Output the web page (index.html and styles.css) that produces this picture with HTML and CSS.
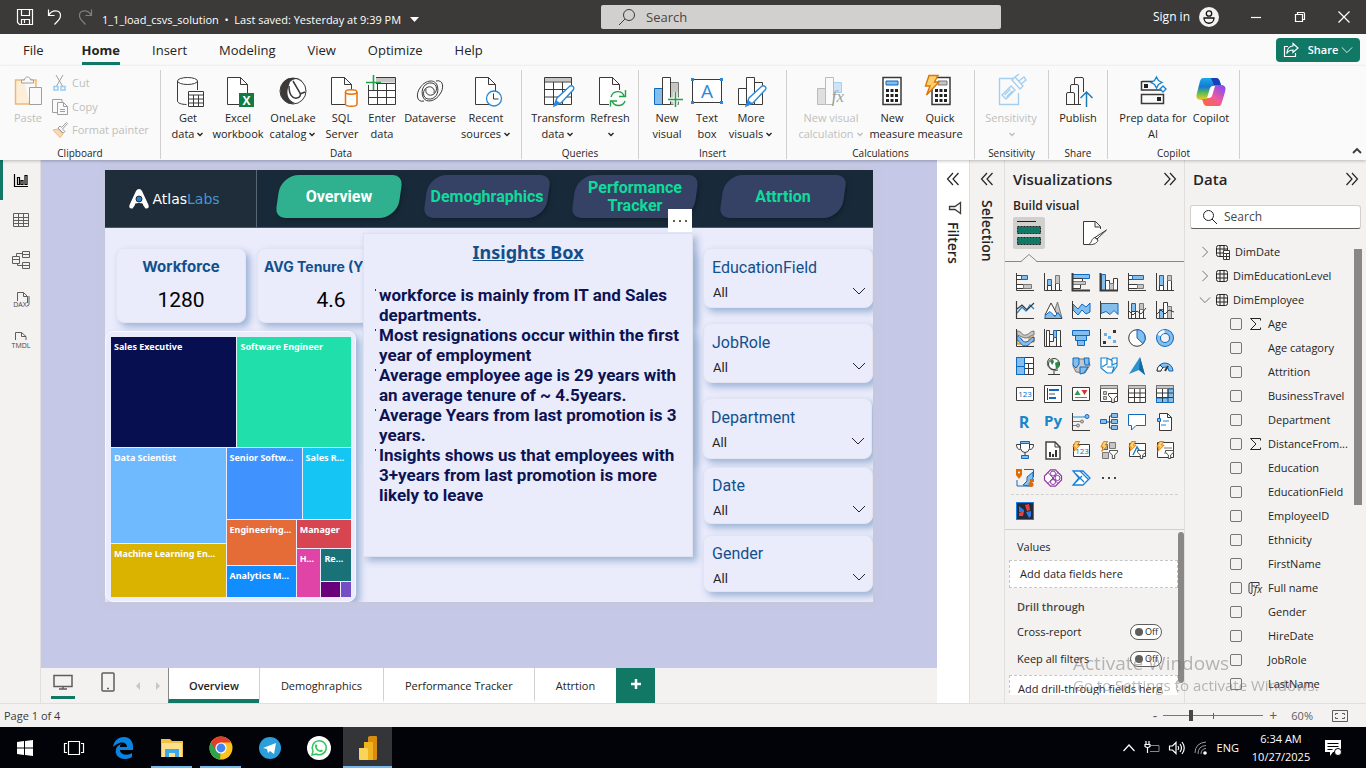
FILE: index.html
```html
<!DOCTYPE html>
<html lang="en">
<head>
<meta charset="utf-8">
<title>1_1_load_csvs_solution</title>
<link rel="stylesheet" href="styles.css">
</head>
<body>
<svg class="sprite" aria-hidden="true">
  <symbol id="chev" viewBox="0 0 8 8"><path d="M1.500 3 4 5.500 6.500 3" fill="none" stroke="currentColor" stroke-width="1.400"/></symbol>
  <symbol id="chevLg" viewBox="0 0 14 14"><path d="M1 4l6 6 6-6" fill="none" stroke="currentColor"/></symbol>
  <symbol id="dblLeft" viewBox="0 0 14 14"><path d="M7 1 1.500 7 7 13M12.500 1 7 7l5.500 6" fill="none" stroke="currentColor" stroke-width="1.200"/></symbol>
  <symbol id="dblRight" viewBox="0 0 14 14"><path d="M1.500 1 7 7l-5.500 6M7 1l5.500 6L7 13" fill="none" stroke="currentColor" stroke-width="1.200"/></symbol>
  <symbol id="lens" viewBox="0 0 16 16"><path d="M10 10l5 5" fill="none" stroke="currentColor"/><circle cx="6.500" cy="6.500" r="5" fill="none" stroke="currentColor"/></symbol>
  <symbol id="file" viewBox="0 0 32 32"><path class="kf" d="M5.500 2.500h13l7 7v20h-20zM18.500 2.500v7h7"/></symbol>
  <symbol id="tbl" viewBox="0 0 14 14"><rect x="1.500" y="1.500" width="11" height="11" rx="2" fill="none" stroke="currentColor"/><path d="M5 1.500v11M9 1.500v11M1.500 5h11M1.500 9h11" fill="none" stroke="currentColor"/></symbol>
  <symbol id="sigma" viewBox="0 0 14 14"><path d="M12.500 3.500v-2h-10l5.500 5.500-5.500 5.500h10v-2" fill="none" stroke="currentColor"/></symbol>
  <symbol id="bolt" viewBox="0 0 10 12"><path class="or" d="M4 .5h4.500L6 4.500h3L2 11.500 3.500 6.500H1z"/></symbol>
  <symbol id="funnel" viewBox="0 0 10 10"><path class="kf" d="M.5 .5h9v2l-3.200 3v4H3.700v-4L.5 2.500z"/></symbol>
</svg>

<header class="titlebar">
  <div class="quick">
    <button class="plain" aria-label="Save"><svg width="18" height="18" viewBox="0 0 18 18"><path class="w" d="M1.500 1.500h15v15h-13l-2-2zM5.500 1.500v6h8v-6M5.500 16.500v-5h8v5M8.500 12v3"/></svg></button>
    <button class="plain" aria-label="Undo"><svg width="18" height="18" viewBox="0 0 18 18"><path class="w" d="M2.500 1.500v6h6M2.500 7.500C6 1 14.500 1.500 14.500 7.500c0 4-3.500 6-6 9"/></svg></button>
    <button class="plain dim" aria-label="Redo"><svg width="18" height="18" viewBox="0 0 18 18"><path class="w" d="M15.500 1.500v6h-6M15.500 7.500C12 1 3.500 1.500 3.500 7.500c0 4 3.500 6 6 9"/></svg></button>
    <button class="plain docname">1_1_load_csvs_solution &nbsp;•&nbsp; Last saved: Yesterday at 9:39 PM<svg width="10" height="6" viewBox="0 0 10 6"><path d="M0 0h9L4.500 5z" fill="#fff"/></svg></button>
  </div>
  <label class="topsearch"><svg width="18" height="18" viewBox="0 0 18 18"><circle cx="11" cy="7" r="5.500" class="k"/><path class="k" d="M7 11l-6 6"/></svg><input type="text" placeholder="Search" aria-label="Search"></label>
  <div class="account">
    <button class="plain">Sign in</button>
    <svg width="20" height="20" viewBox="0 0 20 20"><circle cx="10" cy="10" r="10" fill="#f3f2f1"/><circle cx="10" cy="6.500" r="2.700" fill="none" stroke="#111" stroke-width="1.300"/><path d="M5 11h10c0 7-10 7-10 0z" fill="none" stroke="#111" stroke-width="1.300"/></svg>
  </div>
  <div class="winctl">
    <button class="plain" aria-label="Minimize"><svg width="12" height="12" viewBox="0 0 12 12"><path class="w" d="M1 6.500h10"/></svg></button>
    <button class="plain" aria-label="Restore"><svg width="12" height="12" viewBox="0 0 12 12"><path class="w" d="M1.500 3.500h7v7h-7zM3.500 3.500v-2h6q1 0 1 1v6h-2"/></svg></button>
    <button class="plain" aria-label="Close"><svg width="12" height="12" viewBox="0 0 12 12"><path class="w" d="M.5 .5l11 11M11.500 .5l-11 11"/></svg></button>
  </div>
</header>

<nav class="menubar">
  <a href="#file" class="file">File</a><a href="#home" class="on">Home</a><a href="#insert">Insert</a><a href="#modeling">Modeling</a><a href="#view">View</a><a href="#optimize">Optimize</a><a href="#help">Help</a>
  <button class="share"><svg width="16" height="16" viewBox="0 0 16 16"><path class="w" d="M5 4.500H1.500v10h11V11M10 1.500l5 4.500-5 4.500V8C7 8 5 9 3.800 11.500 4 7 6.500 4 10 4z"/></svg>Share<svg width="12" height="12"><use href="#chevLg"/></svg></button>
</nav>

<section class="ribbon">
  <div class="group clipboard"><div class="row">
    <button class="rb off"><svg width="32" height="32" viewBox="0 0 32 32"><path d="M12 5H3.500v24h14V27M24 12V5h-5" fill="#fcefd9" stroke="#f0b878" stroke-width="1.500"/><path d="M9.500 8V5h3c0-4 6-4 6 0h3v3z" fill="#fafafa" stroke="#a19f9d"/><path d="M17.500 12.500h12v17h-12z" fill="#fafafa" stroke="#a19f9d"/></svg><span>Paste</span></button>
    <div class="stack">
      <button class="sb"><svg width="16" height="16" viewBox="0 0 16 16"><path d="M4 0l6.500 11M11 0L4.500 11" fill="none" stroke="#a19f9d"/><path d="M2 11.500h4v3.500H2zM9 11.500h4v3.500H9z" fill="none" stroke="#9ccbee" stroke-width="1.500"/></svg>Cut</button>
      <button class="sb"><svg width="16" height="16" viewBox="0 0 16 16"><path d="M10 3V.5H.5v13H5M5.500 3.500h6l4 4v8h-10zM11.500 3.500v4h4M8 10.500h5M8 12.500h5" fill="none" stroke="#a19f9d"/></svg>Copy</button>
      <button class="sb"><svg width="16" height="16" viewBox="0 0 16 16"><path d="M1 8l5-1 5 5-3 3.500z" fill="#fbd9b0" stroke="#f0b878"/><path d="M6 6l5 5 2-1.500-2.500-2.500 5-5.500-1-1L9.500 5.500 8 4z" fill="#fafafa" stroke="#a19f9d"/></svg>Format painter</button>
    </div></div><h2>Clipboard</h2></div>

  <div class="group data"><div class="row">
    <button class="rb w48"><svg width="32" height="32" viewBox="0 0 32 32"><path class="k" d="M5.500 6v20c0 2 4 3.500 9 3.500M25.500 6v9"/><ellipse class="kf" cx="15.500" cy="6" rx="10" ry="3.500"/><path class="kf" d="M16.500 16.500h15v15h-15z"/><path class="k" d="M16.500 20h15M16.500 24h15M16.500 28h15M21.500 20v12M26.500 20v12"/></svg><span>Get<br>data<svg width="8" height="8"><use href="#chev"/></svg></span></button>
    <button class="rb w52"><svg width="32" height="32" viewBox="0 0 32 32"><use href="#file" width="32" height="32"/><path d="M17 18h15v14H17z" fill="#107c41"/><text x="24.500" y="30" class="t" fill="#fff" font-size="12" font-weight="700">X</text></svg><span>Excel<br>workbook</span></button>
    <button class="rb w58"><svg width="32" height="32" viewBox="0 0 32 32"><circle cx="16" cy="16" r="13" class="kf"/><path d="M16 3C5 2 0 16 6 24c5 6 10 5 12 4C12 26 9 20 11 13l2-6c4-4 9-4 13 0C24 4 20 2.500 16 3z" fill="#3b3a39"/><path class="k" d="M12 11c0 8 3 13 8 12 3-.5 4-3 3-5l-7-12M23 19l5-2" stroke-width="1.500"/></svg><span>OneLake<br>catalog<svg width="8" height="8"><use href="#chev"/></svg></span></button>
    <button class="rb w40"><svg width="32" height="32" viewBox="0 0 32 32"><use href="#file" width="32" height="32"/><path d="M19.500 17v12c0 3 11.500 3 11.500 0V17" fill="#fff" stroke="#e8710a" stroke-width="1.500"/><ellipse cx="25.200" cy="17" rx="5.700" ry="2.200" fill="#fff" stroke="#e8710a" stroke-width="1.500"/></svg><span>SQL<br>Server</span></button>
    <button class="rb w40"><svg width="32" height="32" viewBox="0 0 32 32"><path d="M2.500 2.500h27v5h-27z" fill="#c8c6c4"/><path class="kf" d="M2.500 8.500h27v21h-27z"/><path class="k" d="M9 2.500h20.500v6M2.500 15.500h27M2.500 22.500h27M11.500 8v21M20.500 8v21"/><path d="M-1 1h11v9H-1z" fill="#fafafa"/><path d="M7.500 0v15M0 7.500h15" stroke="#24a148" stroke-width="1.600"/></svg><span>Enter<br>data</span></button>
    <button class="rb w56"><svg width="32" height="32" viewBox="0 0 32 32"><g class="k"><path d="M10 26c-8 2-8-8-4-13C10 6 20 3 23 10c3 8-2 15-9 14-6-1-6-10 0-12 4-1 7 2 6 6"/><path d="M22 6c8-2 8 8 4 13-4 7-14 10-17 3-3-8 2-15 9-14 6 1 6 10 0 12-4 1-7-2-6-6"/></g></svg><span>Dataverse</span></button>
    <button class="rb w56"><svg width="32" height="32" viewBox="0 0 32 32"><use href="#file" width="32" height="32"/><circle cx="24" cy="23.500" r="7.500" fill="#fff" stroke="#2b88d8" stroke-width="1.300"/><path class="k" d="M23.500 18.500v5.500h5"/></svg><span>Recent<br>sources<svg width="8" height="8"><use href="#chev"/></svg></span></button>
  </div><h2>Data</h2></div>

  <div class="group queries"><div class="row">
    <button class="rb w62"><svg width="32" height="32" viewBox="0 0 32 32"><path class="kf" d="M2.500 2.500h27v27h-27z"/><path d="M3 3h26v3.500H3z" fill="#c8c6c4"/><path class="k" d="M2.500 7h27M2.500 14.500h27M2.500 22h27M11.500 7v22M20.500 7v22"/><path d="M12 31l3-8L28 11c2-1 5 1 3.500 3.500L19 28z" fill="#fff" stroke="#2b88d8" stroke-width="1.400"/><path d="M12 31l2-6 4 3z" fill="#2b88d8"/></svg><span>Transform<br>data<svg width="8" height="8"><use href="#chev"/></svg></span></button>
    <button class="rb w42"><svg width="32" height="32" viewBox="0 0 32 32"><use href="#file" width="32" height="32"/><path d="M15 15h17v17H15z" fill="#fafafa"/><path d="M17 22c2-7 11-7 13-1M31.500 15v6.500H25M31 26c-2 6-11 6-13 0M16.500 31.500V26H23" fill="none" stroke="#24a148" stroke-width="1.400"/></svg><span>Refresh<br><svg width="8" height="8"><use href="#chev"/></svg></span></button>
  </div><h2>Queries</h2></div>

  <div class="group insert"><div class="row">
    <button class="rb w46"><svg width="32" height="32" viewBox="0 0 32 32"><path class="b" d="M3.500 13.500h8v16h-8z"/><path class="g" d="M19.500 7.500h8v22h-8z"/><path class="kf" d="M11.500 2.500h8v27h-8z"/><path d="M24.500 17v15M17 24.500h15" stroke="#fafafa" stroke-width="4"/><path d="M24.500 17v15M17 24.500h15" stroke="#24a148" stroke-width="1.500"/></svg><span>New<br>visual</span></button>
    <button class="rb w34"><svg width="32" height="32" viewBox="0 0 32 32"><path class="kf" d="M1.500 4.500h29v23h-29z"/><path fill="#2b88d8" d="M0 3h3v3H0zM29 3h3v3h-3zM0 26h3v3H0zM29 26h3v3h-3z"/><text class="t" x="16" y="23" font-size="19" fill="#2b88d8">A</text></svg><span>Text<br>box</span></button>
    <button class="rb w54"><svg width="32" height="32" viewBox="0 0 32 32"><path class="kf" d="M3.500 13.500h8v16h-8zM19.500 7.500h8v22h-8z"/><path class="kf" d="M11.500 2.500h8v27h-8z"/><path d="M11 31l3-8L27 11c2-1 5 1 3.500 3.500L18 28z" fill="#fff" stroke="#2b88d8" stroke-width="1.400"/><path d="M11 31l2-6 4 3z" fill="#2b88d8"/></svg><span>More<br>visuals<svg width="8" height="8"><use href="#chev"/></svg></span></button>
  </div><h2>Insert</h2></div>

  <div class="group calc"><div class="row">
    <button class="rb w76 off"><svg width="32" height="32" viewBox="0 0 32 32"><path d="M2.500 13.500h8v16h-8z" fill="#e1dfdd" stroke="#bbb"/><path d="M18.500 7.500h8v10h-8z" fill="#cfe4f6" stroke="#a6cfee"/><path d="M10.500 2.500h8v27h-8z" fill="#fafafa" stroke="#bbb"/><text class="t serif" x="23" y="27" font-size="17" font-style="italic" fill="#a19f9d">fx</text></svg><span>New visual<br>calculation<svg width="8" height="8"><use href="#chev"/></svg></span></button>
    <button class="rb w46"><svg width="32" height="32" viewBox="0 0 32 32"><path class="kf" d="M7 2.500h18v27H7z" stroke-width="1.500"/><path class="b" d="M10 6h12v4H10z"/><path d="M10 15.500h12M10 20.500h12M10 25.500h12" stroke="#222" stroke-width="3" stroke-dasharray="3 1.500"/></svg><span>New<br>measure</span></button>
    <button class="rb w50"><svg width="32" height="32" viewBox="0 0 32 32"><path class="kf" d="M8 2.500h18v27H8z" stroke-width="1.500"/><path class="g" d="M14 6h9v4h-9z"/><path d="M11 15.500h12M11 20.500h12M11 25.500h12" stroke="#222" stroke-width="3" stroke-dasharray="3 1.500"/><path class="or" d="M5 .5h9L10.500 7H15L2.500 20 6 11H1.500z" stroke-width="1.400"/></svg><span>Quick<br>measure</span></button>
  </div><h2>Calculations</h2></div>

  <div class="group sens"><div class="row">
    <button class="rb w60 off"><svg width="32" height="32" viewBox="0 0 32 32"><g fill="none" stroke="#a6cfee" stroke-width="1.400"><path d="M19 3.500H4.500v26h19V18"/><path d="M7 20l9-9 4 4-9 9zM9.500 20l6-6M11.500 22l6-6"/><path d="M17 5l3-3 8 9-3 3zM20 2l4-3M24 6l5-4 2 3-5 4"/></g></svg><span>Sensitivity<br><svg width="8" height="8"><use href="#chev"/></svg></span></button>
  </div><h2>Sensitivity</h2></div>

  <div class="group pub"><div class="row">
    <button class="rb w50"><svg width="32" height="32" viewBox="0 0 32 32"><path class="k" d="M12.500 9V4q0-1.500 1.500-1.500h6q1.500 0 1.500 1.500v13M8.500 17v-6q0-1.500 1.500-1.500h5q1.500 0 1.500 1.500v18.500M4.500 29.500V19q0-1.500 1.500-1.500h5q1.500 0 1.500 1.500v10.500M4 29.500h15"/><path d="M24.500 32V17M18.500 23l6-6 6 6" fill="none" stroke="#1a7db6" stroke-width="1.500"/></svg><span>Publish</span></button>
  </div><h2>Share</h2></div>

  <div class="group cop"><div class="row">
    <button class="rb w76"><svg width="32" height="32" viewBox="0 0 32 32"><path class="k" d="M5 6.500h11M4.500 6v9h20M4.500 19.500h22v9h-22z" stroke-width="1.500"/><path d="M7 9h4v4H7zM20 22h4v4h-4z" fill="#222"/><path d="M19.500 2l2 3.500L25 7.500l-3.500 2-2 3.500-2-3.500-3.500-2 3.500-2zM26 11l3 3-3 3-3-3z" fill="none" stroke="#1a86d0" stroke-width="1.400"/></svg><span>Prep data for<br>AI</span></button>
    <button class="rb w40"><svg width="32" height="32" viewBox="0 0 32 32"><defs><linearGradient id="ca" x1="0" y1="0" x2="0" y2="1"><stop offset="0" stop-color="#1ba8ea"/><stop offset=".4" stop-color="#1578d4"/><stop offset=".7" stop-color="#62c245"/><stop offset="1" stop-color="#ffc72a"/></linearGradient><linearGradient id="cb" x1=".8" y1="0" x2="0" y2="1"><stop offset="0" stop-color="#8a4cf0"/><stop offset=".5" stop-color="#f05c9a"/><stop offset="1" stop-color="#f96b28"/></linearGradient></defs><path d="M8 3h13q3 0 4 4l1 3h-6l-4 12q-2 3-5 3H5q-5-1-3-7L5 6q1-3 3-3z" fill="url(#ca)"/><path d="M16 3h5q3 0 4 4l1 3h-7z" fill="#1540b8"/><path d="M24 31H12q-3 0-4-4l-1-3h5l4-12q1-2 5-2h6q5 1 3 7l-3 10q-1 4-3 4z" fill="url(#cb)"/><path d="M15 13q1-2 3-2h2l-3 10q-1 2-3 2h-2z" fill="#fff"/></svg><span>Copilot</span></button>
  </div><h2>Copilot</h2></div>
  <button class="plain collapse" aria-label="Collapse the ribbon"><svg width="10" height="8" viewBox="0 0 10 8"><path d="M1 6l4-4 4 4" class="k" stroke-width="1.800"/></svg></button>
</section>

<main class="work">
  <nav class="rail">
    <button class="on" aria-label="Report view"><svg width="18" height="18" viewBox="0 0 18 18"><path d="M2.500 3v12.500h13.500M5.500 6.500h2v7h-2zM9 9.500h2v4H9zM13 4.500h2v9h-2z" fill="none" stroke="#000" stroke-width="1.200"/></svg></button>
    <button aria-label="Table view"><svg width="18" height="18" viewBox="0 0 18 18"><path class="r" d="M1.500 2.500h15v13h-15zM1.500 6.500h15M1.500 9.500h15M1.500 12.500h15M6.500 2.500v13M11.500 2.500v13"/></svg></button>
    <button aria-label="Model view"><svg width="20" height="20" viewBox="0 0 20 20"><path class="r" d="M1.500 6.500h7v7h-7zM1.500 9.500h7M11.500 1.500h7v6h-7zM11.500 4.500h7M11.500 12.500h7v6h-7zM11.500 15.500h7M5.500 6.500V3.500h6M6.500 13.500v2h5"/></svg></button>
    <button aria-label="DAX query view"><svg width="20" height="20" viewBox="0 0 20 20"><path class="r" d="M6.500 11V2.500h6l4 4V13M12.500 2.500v4h4M18 6v8q0 2-2 2"/><text class="t" x="9" y="17" font-size="7" fill="#484644">DAX</text></svg></button>
    <button aria-label="TMDL view"><svg width="20" height="20" viewBox="0 0 20 20"><path class="r" d="M4.500 10V2.500h6l4.500 4V10M10.500 2.500v4H15"/><text class="t" x="10" y="18" font-size="7" fill="#484644">TMDL</text></svg></button>
  </nav>

  <div class="center">
    <div class="canvas">
      <article class="report">
        <header class="rhead">
          <div class="logo"><svg width="20" height="20" viewBox="0 0 20 20"><path d="M7 2q1-2 3-2t3 2l6.500 14q1 4-3 3.500L14 16q1-2-4-2t-4 2l-2.500 3.500Q-.5 20 .5 16z" fill="#fff"/><circle cx="10" cy="10" r="3" fill="#2b7cc0" stroke="#1f2d3b"/></svg><span>Atlas<b>Labs</b></span></div>
          <nav class="pills"><a href="#ov" class="on">Overview</a><a href="#de">Demoghraphics</a><a href="#pt">Performance<br>Tracker</a><a href="#at">Attrtion</a></nav>
        </header>
        <div class="rbody">
          <div class="visuals">
            <div class="cards">
              <section class="kpi kpi-first"><h3>Workforce</h3><p>1280</p></section>
              <section class="kpi kpi-wide"><h3 class="sm">AVG Tenure (Y</h3><p>4.6</p></section>
              <section class="kpi kpi-rest"></section>
            </div>
            <div class="charts">
              <section class="treemap">
                <div class="tr" style="flex-grow:110"><div class="c1" style="flex-grow:126">Sales Executive</div><div class="c2" style="flex-grow:114">Software Engineer</div></div>
                <div class="tr" style="flex-grow:150">
                  <div class="tc" style="flex-grow:115"><div class="c3" style="flex-grow:96">Data Scientist</div><div class="c4" style="flex-grow:54">Machine Learning En...</div></div>
                  <div class="tc" style="flex-grow:125">
                    <div class="tr" style="flex-grow:72"><div class="c5" style="flex-grow:76">Senior Softw...</div><div class="c6" style="flex-grow:49">Sales R...</div></div>
                    <div class="tr" style="flex-grow:77">
                      <div class="tc" style="flex-grow:70"><div class="c7" style="flex-grow:45">Engineering...</div><div class="c8" style="flex-grow:32">Analytics M...</div></div>
                      <div class="tc" style="flex-grow:55"><div class="c9" style="flex-grow:28">Manager</div>
                        <div class="tr" style="flex-grow:49"><div class="c10" style="flex-grow:24">H...</div>
                          <div class="tc" style="flex-grow:30"><div class="c11" style="flex-grow:33">Re...</div><div class="tr" style="flex-grow:16"><div class="c12" style="flex-grow:19"></div><div class="c13" style="flex-grow:11"></div></div></div>
                        </div></div>
                    </div>
                  </div>
                </div>
              </section>
              <section class="under"></section>
            </div>
          </div>
          <div class="slicers">
            <div class="slicer"><label for="s1">EducationField</label><div class="sel"><select id="s1"><option>All</option></select><svg width="14" height="14"><use href="#chevLg"/></svg></div></div>
            <div class="slicer"><label for="s2">JobRole</label><div class="sel"><select id="s2"><option>All</option></select><svg width="14" height="14"><use href="#chevLg"/></svg></div></div>
            <div class="slicer near"><label for="s3">Department</label><div class="sel"><select id="s3"><option>All</option></select><svg width="14" height="14"><use href="#chevLg"/></svg></div></div>
            <div class="slicer short"><label for="s4">Date</label><div class="sel"><select id="s4"><option>All</option></select><svg width="14" height="14"><use href="#chevLg"/></svg></div></div>
            <div class="slicer short"><label for="s5">Gender</label><div class="sel"><select id="s5"><option>All</option></select><svg width="14" height="14"><use href="#chevLg"/></svg></div></div>
          </div>
          <aside class="insights">
            <button class="more" aria-label="More options"><i></i><i></i><i></i></button>
            <h2>Insights Box</h2>
            <ul>
              <li>workforce is mainly from IT and Sales<br>departments.</li>
              <li>Most resignations occur within the first<br>year of employment</li>
              <li>Average employee age is 29 years with<br>an average tenure of ~ 4.5years.</li>
              <li>Average Years from last promotion is 3<br>years.</li>
              <li>Insights shows us that employees with<br>3+years from last promotion is more<br>likely to leave</li>
            </ul>
          </aside>
        </div>
      </article>
    </div>
    <div class="pages">
      <button class="dev on" aria-label="Desktop layout"><svg width="20" height="16" viewBox="0 0 20 16"><path d="M1 1.500h18v11H1zM6 15h8M10 12v3" fill="none" stroke="#605e5c" stroke-width="1.500"/></svg></button>
      <button class="dev" aria-label="Mobile layout"><svg width="14" height="20" viewBox="0 0 14 20"><rect x="1" y="1" width="12" height="18" rx="1" fill="none" stroke="#605e5c" stroke-width="1.500"/><path d="M6 16.500h2" stroke="#605e5c" stroke-width="1.500"/></svg></button>
      <button class="arr" aria-label="Previous page"><svg width="6" height="8"><path d="M5 0v8L1 4z" fill="#c8c6c4"/></svg></button>
      <button class="arr" aria-label="Next page"><svg width="6" height="8"><path d="M1 0v8l4-4z" fill="#c8c6c4"/></svg></button>
      <div class="ptabs"><button class="on">Overview</button><button>Demoghraphics</button><button>Performance Tracker</button><button>Attrtion</button><button class="add" aria-label="New page"><svg width="12" height="12"><path d="M6 1v10M1 6h10" stroke="#fff" stroke-width="2.500"/></svg></button></div>
    </div>
  </div>

  <aside class="strip filters"><button class="plain" aria-label="Expand filters"><svg width="14" height="14"><use href="#dblLeft"/></svg></button><svg width="14" height="14" viewBox="0 0 14 14"><path class="k" d="M12.500 1.500v11L7 8.500H1.500v-3H7z" stroke-width="1.300"/></svg><h2>Filters</h2></aside>
  <aside class="strip selection"><button class="plain" aria-label="Expand selection"><svg width="14" height="14"><use href="#dblLeft"/></svg></button><h2>Selection</h2></aside>

  <aside class="viz">
    <div class="ptitle"><h2>Visualizations</h2><button class="plain" aria-label="Collapse"><svg width="14" height="14"><use href="#dblRight"/></svg></button></div>
    <h3>Build visual</h3>
    <div class="modes">
      <button class="on" aria-label="Build"><svg width="24" height="24" viewBox="0 0 24 24"><path d="M0 .5h19" stroke="#222"/><path d="M.5 5.500h23v7H.5zM.5 16.500h23v7H.5z" fill="#117865" stroke="#222" stroke-dasharray="2 1"/></svg></button>
      <button aria-label="Format"><svg width="26" height="26" viewBox="0 0 26 26"><path class="kf" d="M8 24.500H1.500v-23h12l5 5V9M13 1.500V7h5.500"/><path class="kf" d="M24.500 10L15 19l-2-1.500zM13 17.500l3 2.500c-1 4-6 5-9 4.500 3-2 2-6 6-7z"/></svg></button>
      <svg class="notch" width="16" height="8" viewBox="0 0 16 8"><path d="M0 8L8 0l8 8z" fill="#f3f2f1"/><path d="M0 7.500L8 .5l8 7" fill="none" stroke="#8a8886"/></svg>
    </div>
    <div class="vgrid">
      <svg viewBox="0 0 18 18"><path class="kf" d="M.5 2.500h5v4h-5zM.5 11.500h7v4h-7z"/><path class="b" d="M5.500 2.500h6v4h-6z"/><path class="g" d="M7.500 11.500h8v4h-8z"/><path class="k" d="M.5 0v17.500H18"/></svg>
      <svg viewBox="0 0 18 18"><path class="b" d="M3.500 6.500h4v6h-4z"/><path class="kf" d="M3.500 12.500h4v5h-4zM11.500 10.500h4v7h-4z"/><path class="g" d="M11.500 2.500h4v8h-4z"/><path class="k" d="M.5 0v17.500H18"/></svg>
      <svg viewBox="0 0 18 18"><path class="b" d="M.5 1.500h17v4H.5z"/><path class="kf" d="M.5 5.500h10v3H.5zM.5 11.500h8v4h-8z"/><path class="g" d="M.5 8.500h13v3H.5z"/><path class="k" d="M.5 0v17.500H18" stroke-width="2"/></svg>
      <svg viewBox="0 0 18 18"><path class="b" d="M1.500 1.500h4v16h-4z"/><path class="kf" d="M5.500 7.500h4v10h-4zM13.500 5.500h4v12h-4z"/><path class="g" d="M9.500 10.500h4v7h-4z"/><path class="k" d="M.5 0v17.500H18" stroke-width="2"/></svg>
      <svg viewBox="0 0 18 18"><path class="kf" d="M.5 2.500h4v4h-4zM.5 11.500h9v4h-9z"/><path class="b" d="M4.500 2.500h11v4h-11z"/><path class="g" d="M9.500 11.500h6v4h-6z"/><path class="k" d="M.5 0v17.500H18"/></svg>
      <svg viewBox="0 0 18 18"><path class="b" d="M3.500 2.500h4v10h-4z"/><path class="kf" d="M3.500 12.500h4v5h-4zM11.500 7.500h4v10h-4z"/><path class="g" d="M11.500 2.500h4v5h-4z"/><path class="k" d="M.5 0v17.500H18"/></svg>

      <svg viewBox="0 0 18 18"><path d="M1 12l5-6 4 4 4-6 4 4" fill="none" stroke="#1a86d0" stroke-width="1.300"/><path class="k" d="M.5 0v17.500H18M1 8l5-4 5 5 7-7" stroke-width="1.200"/></svg>
      <svg viewBox="0 0 18 18"><path class="g" d="M8 17l5.500-16L18 17z"/><path class="kf" d="M1 14l6-12 7 13z"/><path class="b" d="M1 17.500v-3l5-4 5 5 3-4 4 6z"/><path class="k" d="M.5 17.500H18"/></svg>
      <svg viewBox="0 0 18 18"><path class="b" d="M1 3l5 5 4-5 4 3 4-4v9l-4 2-4-4-4 5-5-5z"/><path class="k" d="M.5 0v17.500H18"/></svg>
      <svg viewBox="0 0 18 18"><path class="b" d="M1 2.500h17v11l-4-4-4 4-4-3-5 2z"/><path class="k" d="M.5 0v17.500H18"/></svg>
      <svg viewBox="0 0 18 18"><path class="b" d="M3.500 2.500h4v8h-4z"/><path class="kf" d="M3.500 10.500h4v7h-4zM11.500 8.500h4v9h-4z"/><path class="g" d="M11.500 2.500h4v6h-4z"/><path class="k" d="M.5 0v17.500H18M1 10l4 4 4-4 4 3 5-6"/></svg>
      <svg viewBox="0 0 18 18"><path class="b" d="M3.500 8.500h4v9h-4z"/><path class="kf" d="M7.500 1.500h4v16h-4z"/><path class="g" d="M11.500 5.500h4v12h-4z"/><path class="k" d="M.5 0v17.500H18M1 13l4-4 4 4 4-4 5 2"/></svg>

      <svg viewBox="0 0 18 18"><path class="or" d="M1 10h5v5H1zM13 8h5v5h-5z"/><path class="g" d="M1 2c5 0 5 5 9 4s4-4 8-4v4c-4 0-5 3-8 3S5 7 1 6z"/><path class="b" d="M1 7c4 0 4 6 9 6 4 0 4-5 8-5v4c-3 0-4 5-9 5-4 0-5-5-8-6z"/><path class="k" d="M.5 0v17.500H18"/></svg>
      <svg viewBox="0 0 18 18"><path class="kf" d="M2.500 1.500h3v16h-3zM12.500 1.500h4v16h-4zM5.500 5.500h4v7h-4z"/><path class="b" d="M9.500 1.500h3v7h-3z"/><path class="k" d="M.5 0v17.500H18"/></svg>
      <svg viewBox="0 0 18 18"><path class="b" d="M.5 1.500h17v5H.5zM3.500 6.500h11v5h-11zM5.500 11.500h7v5h-7z"/></svg>
      <svg viewBox="0 0 18 18"><path class="k" d="M.5 0v17.500H18"/><path fill="#333" d="M13 1h3v3h-3zM3 12h3v3H3z"/><path fill="#69b1ea" d="M4 4h3v3H4zM8 7h3v3H8zM13 11h3v3h-3z"/></svg>
      <svg viewBox="0 0 18 18"><circle cx="9" cy="9" r="8.300" class="kf"/><path class="b" d="M9 .7a8.300 8.300 0 0 1 6 14L9 9z"/></svg>
      <svg viewBox="0 0 18 18"><circle cx="9" cy="9" r="6.500" fill="none" stroke="#1068bf" stroke-width="5"/><circle cx="9" cy="9" r="6.500" fill="none" stroke="#83beec" stroke-width="3"/><path d="M3 6.500A6.500 6.500 0 0 1 8.500 2.500" fill="none" stroke="#fff" stroke-width="3"/></svg>

      <svg viewBox="0 0 18 18"><path class="kf" d="M.5 .5h17v17H.5zM12.500 6v11M8 11.500h9M8.500 6.500h9"/><path class="b" d="M.5 .5h8v17h-8zM.5 9.500h8"/></svg>
      <svg viewBox="0 0 18 18"><circle class="kf" cx="10" cy="7" r="5.500"/><path d="M6 4l3-2 1 3-2 3zM11 6l4-2v5l-3 3z" fill="#2a8a44"/><path class="k" d="M6 1c-6 5-1 14 8 12M10 14v3M4 17.500h12"/></svg>
      <svg viewBox="0 0 18 18"><path class="g" d="M2 2h14l2 6-5 8-9-1-3-6z"/><path class="b" d="M1 1h6v6l-3 4-3-3zM12 1h5v7h-4zM8 10h8l-4 6-4 1z"/></svg>
      <svg viewBox="0 0 18 18"><path d="M1 1h6l4 2 2-2h4v8l-5 7H7l-6-5zM7 1v6l-5 3M12 3v5l5-2M7 10h7l-2 6" fill="#fff" stroke="#1a86d0" stroke-width="1.200"/></svg>
      <svg viewBox="0 0 18 18"><path d="M12 0l5 18-6-5-10 4z" fill="#2b93d1"/><path d="M12 0l5 18-6-5z" fill="#176a9e"/></svg>
      <svg viewBox="0 0 18 18"><path class="b" d="M1 14a8 8 0 0 1 16 0h-4a4 4 0 0 0-8 0z"/><path class="kf" d="M1 14a8 8 0 0 1 3-6l3 3q-2 1-2 3z"/><path class="k" d="M12 9l-3 5" stroke-width="2"/></svg>

      <svg viewBox="0 0 18 18"><path class="kf" d="M.5 2.500h17v13H.5z"/><text class="t" x="9" y="12" font-size="8" fill="#1068bf">123</text></svg>
      <svg viewBox="0 0 18 18"><path class="kf" d="M.5 .5h17v17H.5zM3.500 3v12"/><path d="M5 5h10M5 13h7" stroke="#1068bf" stroke-width="2"/><path d="M5 9h6" stroke="#555"/></svg>
      <svg viewBox="0 0 18 18"><path class="kf" d="M.5 2.500h17v13H.5z"/><path d="M5.500 5l3 5h-6z" fill="#3c9a4a"/><path d="M12.500 10l3-5h-6z" fill="#d13438"/><path d="M3 12.500h12" stroke="#777"/></svg>
      <svg viewBox="0 0 18 18"><path class="kf" d="M.5 .5h17v16H.5z"/><path class="g" d="M.5 .5h17v3H.5zM3.500 6.500h3v3h-3zM3.500 11.500h3v3h-3z"/><use href="#funnel" x="8" y="8" width="10" height="10"/></svg>
      <svg viewBox="0 0 18 18"><path class="kf" d="M.5 .5h17v17H.5z"/><path class="g" d="M.5 .5h17v3H.5z"/><path class="k" d="M1 8h16M1 12.500h16M6.500 4v13M12 4v13"/></svg>
      <svg viewBox="0 0 18 18"><path class="kf" d="M.5 .5h17v17H.5z"/><path class="g" d="M.5 .5h17v3H.5z"/><path class="b" d="M12 4h5.500v13.500H.5V13H12z"/><path class="k" d="M1 8h16M1 12.500h16M6.500 4v13M12 4v13"/></svg>

      <svg viewBox="0 0 18 18"><text class="t" x="8" y="15" font-size="16" font-weight="700" fill="#1a86c8">R</text></svg>
      <svg viewBox="0 0 18 18"><text class="t" x="9" y="13" font-size="15" font-weight="700" fill="#1a86c8">Py</text></svg>
      <svg viewBox="0 0 18 18"><path class="k" d="M.5 0v17.500H18"/><path d="M1 4h12" stroke="#1a86d0"/><path d="M1 8.500h8M1 12.500h5" stroke="#777"/><circle cx="15" cy="3.500" r="2" class="b"/><circle cx="10" cy="8.500" r="1.500" class="g"/><circle cx="6" cy="12.500" r="1.500" class="g"/></svg>
      <svg viewBox="0 0 18 18"><path class="k" d="M6 9h6M9.500 3v12M9.500 3H12M9.500 15H12"/><path class="b" d="M.5 6.500h6v4h-6zM11.500 .5h6v4h-6zM11.500 6.500h6v4h-6zM11.500 12.500h6v4h-6z"/></svg>
      <svg viewBox="0 0 18 18"><path d="M.5 1.500h17v11H8L3.500 17v-4.500h-3z" fill="#fff" stroke="#1068bf"/></svg>
      <svg viewBox="0 0 18 18"><path class="kf" d="M3.500 .5h8l4 4v13h-12zM11.500 .5v4h4"/><path class="b" d="M1.500 5.500h3v3h-3z"/><path d="M7 8h6M5 12h5" stroke="#1a86d0"/></svg>

      <svg viewBox="0 0 18 18"><path class="kf" d="M4.500 1.500h9v6q-1 4-4.500 4t-4.500-4zM4.500 3.500h-4q0 5 4 5M13.500 3.500h4q0 5-4 5M9 11.500v3"/><path class="b" d="M4.500 .5h9v2h-9zM5.500 14.500h7v3h-7z"/></svg>
      <svg viewBox="0 0 18 18"><path d="M2 1h9l5 5v12H2z" fill="#fff" stroke="#444" stroke-width="1.500"/><path d="M6 11v5M9 13v3M12 9v7" stroke="#333" stroke-width="2"/><path class="k" d="M11 1v5h5"/></svg>
      <svg viewBox="0 0 18 18"><path class="kf" d="M1.500 3.500h16v12h-16z"/><text class="t" x="10" y="13" font-size="8" fill="#1068bf">123</text><use href="#bolt" width="9" height="11"/></svg>
      <svg viewBox="0 0 18 18"><path class="g" d="M9.500 1.500h6v6h-6zM2.500 11.500h6v6h-6z"/><path class="b" d="M2.500 3.500h5v5h-5z"/><use href="#bolt" width="9" height="11"/><use href="#funnel" x="9" y="9" width="9" height="9"/></svg>
      <svg viewBox="0 0 18 18"><path class="kf" d="M1.500 2.500h16v13h-16z"/><path d="M5 14l4-8 4 6" fill="none" stroke="#1a86d0" stroke-width="1.500"/><use href="#bolt" width="9" height="11"/><use href="#funnel" x="9" y="9" width="9" height="9"/></svg>
      <svg viewBox="0 0 18 18"><path class="kf" d="M1.500 1.500h16v15h-16z"/><path d="M8 7h8M8 12h4" stroke="#777"/><use href="#bolt" width="9" height="11"/><use href="#funnel" x="9" y="9" width="9" height="9"/></svg>

      <svg viewBox="0 0 18 18"><path d="M1 11v6h14M8 .5h9.500V8" fill="none" stroke="#1068bf"/><path class="b" d="M7 16l4-4V8l6-5v6l-4 8z"/><path d="M0 0h6v6l-3 4-3-4zM14 10h4v3h-4z" fill="#e06a00"/><circle cx="3" cy="3.500" r="1" fill="#fff"/><circle cx="15" cy="15.500" r="2.500" fill="#e06a00"/></svg>
      <svg viewBox="0 0 18 18"><path d="M6.500 .8h5L17.500 7v4l-6 6.200h-5L.5 11V7z" fill="#fff" stroke="#8e3a9d" stroke-width="1.200"/><path d="M9 9L4 3.500M9 9l5 5.500M9 9l5-5.500M9 9l-5 5.500" fill="none" stroke="#8e3a9d"/><g fill="none" stroke="#8e3a9d"><circle cx="9" cy="4.500" r="2.500"/><circle cx="9" cy="13" r="2.500"/><circle cx="13.500" cy="9" r="2.500"/></g></svg>
      <svg viewBox="0 0 18 18"><path d="M1 2h10l7 7-7 7H1l6-7zM4 5l8 8M8 2l8 8M2 15l8-8" fill="#fff" stroke="#1a7fd8" stroke-width="1.300"/></svg>
      <svg viewBox="0 0 18 18"><path fill="#444" d="M2 8h2v2H2zM8 8h2v2H8zM14 8h2v2h-2z"/></svg>
    </div>
    <div class="custom"><svg width="18" height="18" viewBox="0 0 18 18"><path d="M0 0h18v18H0z" fill="#1a7fe0"/><path d="M1 1h16v16H1z" fill="#252a38"/><path d="M3 4l5 4v2H3zM10 10l5-1v5l-2 2z" fill="#2d7be8"/><path d="M9 3l4-1 1 6-3 1zM3 11l5-2-1 5H3z" fill="#e8413a"/></svg></div>
    <div class="wells">
      <h4>Values</h4>
      <button class="drop">Add data fields here</button>
      <h4 class="bold">Drill through</h4>
      <label class="tog">Cross-report<span><input type="checkbox"><i>Off</i></span></label>
      <label class="tog">Keep all filters<span><input type="checkbox"><i>Off</i></span></label>
      <button class="drop low">Add drill-through fields here</button>
    </div>
  </aside>

  <aside class="fields">
    <div class="ptitle"><h2>Data</h2><button class="plain" aria-label="Collapse"><svg width="14" height="14"><use href="#dblRight"/></svg></button></div>
    <label class="fsearch"><svg width="16" height="16"><use href="#lens"/></svg><input type="text" placeholder="Search" aria-label="Search fields"></label>
    <ul class="tree">
      <li class="tb"><svg class="tw right" width="12" height="12"><use href="#chevLg"/></svg><svg width="16" height="16" viewBox="0 0 16 16"><use href="#tbl" width="14" height="14"/><path class="kf" d="M8.500 6.500h6v9h-6z"/><path class="k" d="M8 9.500h7M8 12.500h7M11.500 9v6"/></svg>DimDate</li>
      <li class="tb"><svg class="tw right" width="12" height="12"><use href="#chevLg"/></svg><svg width="14" height="14"><use href="#tbl"/></svg>DimEducationLevel</li>
      <li class="tb"><svg class="tw" width="12" height="12"><use href="#chevLg"/></svg><svg width="14" height="14"><use href="#tbl"/></svg>DimEmployee</li>
      <li><label><input type="checkbox"><svg><use href="#sigma"/></svg>Age</label></li>
      <li><label><input type="checkbox"><svg></svg>Age catagory</label></li>
      <li><label><input type="checkbox"><svg></svg>Attrition</label></li>
      <li><label><input type="checkbox"><svg></svg>BusinessTravel</label></li>
      <li><label><input type="checkbox"><svg></svg>Department</label></li>
      <li><label><input type="checkbox"><svg><use href="#sigma"/></svg>DistanceFrom...</label></li>
      <li><label><input type="checkbox"><svg></svg>Education</label></li>
      <li><label><input type="checkbox"><svg></svg>EducationField</label></li>
      <li><label><input type="checkbox"><svg></svg>EmployeeID</label></li>
      <li><label><input type="checkbox"><svg></svg>Ethnicity</label></li>
      <li><label><input type="checkbox"><svg></svg>FirstName</label></li>
      <li><label><input type="checkbox"><svg viewBox="0 0 14 14"><path class="k" d="M9 1.500H3q-2 0-2 2v7q0 2 2 2h1M4 2v10M4 5h3M9 1.500h2v3"/><text class="t" x="10" y="12" font-size="10" font-style="italic" fill="#222">fx</text></svg>Full name</label></li>
      <li><label><input type="checkbox"><svg></svg>Gender</label></li>
      <li><label><input type="checkbox"><svg></svg>HireDate</label></li>
      <li><label><input type="checkbox"><svg></svg>JobRole</label></li>
      <li><label><input type="checkbox"><svg></svg>LastName</label></li>
    </ul>
  </aside>
</main>

<footer class="status">
  <span>Page 1 of 4</span>
  <div class="zoom"><button class="plain" aria-label="Zoom out">-</button><input type="range" min="0" max="100" value="27" aria-label="Zoom"><button class="plain" aria-label="Zoom in">+</button><span class="pct">60%</span>
  <button class="plain" aria-label="Fit to page"><svg width="16" height="12" viewBox="0 0 16 12"><path d="M.5 .5h15v11H.5zM3.500 5V3.500H6M10 3.500h2.500V5M3.500 7v1.500H6M10 8.500h2.500V7" fill="none" stroke="#605e5c"/></svg></button></div>
</footer>

<div class="taskbar">
  <button aria-label="Start"><svg width="16" height="16" viewBox="0 0 16 16"><path d="M0 2l7-1v6.500H0zM8 1l8-1v7.500H8zM0 8.500h7V15l-7-1zM8 8.500h8V16l-8-1z" fill="#fff"/></svg></button>
  <button aria-label="Task view"><svg width="20" height="16" viewBox="0 0 20 16"><path class="w" d="M4.500 1.500h11v13h-11zM3 3.500H.5v9H3M17 3.500h2.500v9H17" stroke-width="1.300"/></svg></button>
  <button aria-label="Edge"><svg width="22" height="22" viewBox="0 0 22 22"><path d="M1 10C2 3 7 0 12 0c6 0 9 5 9 9v4H8c0 5 8 6 12 3v4C11 25 2 20 4 12c1-3 3-4 5-5-1 1-1 2-1 3h7c0-6-8-6-14 0z" fill="#0a84e0"/></svg></button>
  <button class="open" aria-label="File Explorer"><svg width="22" height="20" viewBox="0 0 22 20"><path d="M0 1h9l2 2h11v16H0z" fill="#f0c04a"/><path d="M1 5h20v14H1z" fill="#fde08a"/><path d="M4 19v-8h14v8h-4v-4H8v4z" fill="#3fa9e8"/></svg></button>
  <button class="open" aria-label="Chrome"><svg width="24" height="24" viewBox="0 0 24 24"><circle cx="12" cy="12" r="11.500" fill="#fcc31e"/><path d="M12 12L2 6.300A11.500 11.500 0 0 0 11 23.500z" fill="#2fa24c"/><path d="M12 6.500h10A11.500 11.500 0 0 0 2 6.200l5.500 9z" fill="#e33b2e"/><circle cx="12" cy="12" r="5.600" fill="#fff"/><circle cx="12" cy="12" r="4.400" fill="#4285f4"/></svg></button>
  <button aria-label="Telegram"><svg width="22" height="22" viewBox="0 0 22 22"><circle cx="11" cy="11" r="11" fill="#2a9fdc"/><path d="M4 11l13-5-2 11-4-3-2 2-1-4z" fill="#fff"/></svg></button>
  <button aria-label="WhatsApp"><svg width="24" height="24" viewBox="0 0 24 24"><circle cx="12" cy="12" r="12" fill="#fff"/><path d="M5 19l1-4a7 7 0 1 1 3 3z" fill="none" stroke="#32c65a" stroke-width="1.500"/><path d="M9 8l1.500 2-1 1q1 2.500 3.500 3.500l1-1 2 1q-1 2-3 1.500-4-1-5-5-.3-2 1-3z" fill="#32c65a"/></svg></button>
  <button class="open cur" aria-label="Power BI"><svg width="20" height="24" viewBox="0 0 20 24"><path d="M12 0h6q1 0 1 1v22q0 1-1 1h-8V1z" fill="#d98c10"/><path d="M6 6h8q1 0 1 1v17H6z" fill="#f0b41e"/><path d="M1 12h7q2 0 2 2v10H2q-1 0-1-1z" fill="#f8d45c"/></svg></button>
  <div class="tray">
    <svg width="12" height="8" viewBox="0 0 12 8"><path class="w" d="M.5 7L6 1l5.500 6" stroke-width="1.400"/></svg>
    <svg width="16" height="14" viewBox="0 0 16 14"><path d="M7 4.500h8v6H6" fill="none" stroke="#8a8886"/><path class="w" d="M2 0v3M5 0v3M1 3.500h5v2q-2.500 2-5 0zM3.500 7v5"/></svg>
    <svg width="16" height="14" viewBox="0 0 16 14"><path class="w" d="M.5 5h3L7 1.500v11L3.500 9h-3zM9 5q1.500 2 0 4M11 3q3 4 0 8M13 1q4.500 6 0 12"/></svg>
    <svg width="14" height="14" viewBox="0 0 14 14"><path d="M1 12Q1 2 12 1M4 13q0-8 8-8.500M7 13q0-5 5-5.500" fill="none" stroke="#9a9a9a"/><circle cx="11" cy="12" r="1.800" fill="#fff"/></svg>
    <span>ENG</span>
    <span class="clock">6:34 AM<br>10/27/2025</span>
    <svg width="18" height="18" viewBox="0 0 18 18"><path d="M1 1h16v12H9l-3 4v-4H1z" fill="#fff"/><path d="M3.500 4.500h11M3.500 7.500h11M3.500 10.500h5" stroke="#000"/><circle cx="14" cy="13" r="3.500" fill="#fff" stroke="#000"/></svg>
  </div>
</div>
<div class="mark"><p class="big">Activate Windows</p><p>Go to Settings to activate Windows.</p></div>
</body>
</html>
```
FILE: styles.css
```css
* { box-sizing: border-box; margin: 0; padding: 0; }
body { height: 100vh; display: flex; flex-direction: column; overflow: hidden; background: #f3f2f1; color: #252423; font: 12px/16px "Open Sans", "Noto Sans", sans-serif; }
button, input, select { font: inherit; color: inherit; border: 0; background: none; }
h2, h3, h4 { font-weight: 400; font-size: inherit; }
ul { list-style: none; }
a { color: inherit; text-decoration: none; }
svg { flex: none; overflow: visible; }
.sprite { position: absolute; width: 0; height: 0; }
.plain { display: flex; align-items: center; justify-content: center; }
.k { fill: none; stroke: #3b3a39; }
.kf { fill: #fff; stroke: #3b3a39; }
.b { fill: #83beec; stroke: #1068bf; }
.g { fill: #c8c6c4; stroke: #797775; }
.or { fill: #ffcf70; stroke: #d97706; }
.w { fill: none; stroke: #fff; stroke-width: 1.2; }
.r { fill: none; stroke: #605e5c; }
.t { text-anchor: middle; }
.serif { font-family: "Liberation Serif", serif; }

/* title bar */
.titlebar { height: 34px; flex: none; display: grid; grid-template-columns: 1fr 400px 233px 132px; align-items: center; background: #3b3a39; color: #fff; }
.quick { display: flex; align-items: center; gap: 12px; padding-left: 16px; }
.dim { opacity: .35; }
.docname { font-size: 11px; gap: 9px; white-space: nowrap; padding-top: 5px; margin-left: -4px; }
.topsearch { height: 24px; background: #d2d0ce; border-radius: 2px; display: flex; align-items: center; gap: 10px; padding-left: 17px; color: #3b3a39; }
.topsearch input { flex: 1; outline: 0; font-size: 13px; }
.topsearch input::placeholder, .fsearch input::placeholder { color: #484644; opacity: 1; }
.account { display: flex; justify-content: flex-end; align-items: center; gap: 9px; padding-right: 15px; }
.winctl { display: flex; }
.winctl button { width: 44px; height: 34px; }

/* menu */
.menubar { height: 32px; flex: none; display: flex; gap: 32px; padding: 4px 6px 0 23px; background: #fafafa; font-size: 13px; }
.menubar a { height: 27px; line-height: 24px; border-bottom: 3px solid transparent; }
.menubar .file { margin-right: 6px; }
.menubar .on { font-weight: 700; border-color: #117865; }
.share { margin-left: auto; width: 84px; height: 24px; background: #117865; color: #fff; border-radius: 4px; display: flex; align-items: center; justify-content: center; gap: 6px; font-size: 11px; font-weight: 600; }
.share svg:first-child { margin-right: 3px; }
.share svg:last-child { margin-left: -3px; }

/* ribbon */
.ribbon { height: 94px; flex: none; display: flex; background: #fafafa; padding: 4px 0 1px; position: relative; z-index: 2; box-shadow: 0 1px 3px rgba(0,0,0,.25); font-size: 11px; }
.group { border-right: 1px solid #d2d0ce; display: flex; flex-direction: column; }
.group h2 { font-size: 10px; line-height: 12px; text-align: center; margin-top: auto; }
.row { display: flex; height: 72px; padding-top: 5px; }
.rb { display: flex; flex-direction: column; align-items: center; gap: 3px; white-space: nowrap; height: 68px; text-align: center; }
.rb span { display: flow-root; }
.rb span svg { margin-left: 2px; }
.off { color: #c0bebc; }
.clipboard { width: 161px; }
.clipboard .row { padding-left: 12px; }
.clipboard .rb { width: 32px; }
.stack { display: flex; flex-direction: column; margin: -4px 0 0 8px; }
.sb { display: flex; gap: 4px; align-items: center; height: 24px; color: #c0bebc; }
.data { width: 361px; } .data .row { padding-left: 3px; }
.queries { width: 117px; } .queries .row { padding-left: 5px; }
.insert { width: 148px; } .insert .row { padding-left: 5px; }
.calc { width: 188px; } .calc .row { padding-left: 6px; }
.sens { width: 74px; } .sens .row { padding-left: 6px; }
.pub { width: 59px; } .pub .row { padding-left: 4px; }
.cop { width: 132px; } .cop .row { padding-left: 7px; }
.w34 { width: 34px; } .w40 { width: 40px; } .w42 { width: 42px; } .w46 { width: 46px; } .w48 { width: 48px; } .w50 { width: 50px; } .w52 { width: 52px; } .w54 { width: 54px; } .w56 { width: 56px; } .w58 { width: 58px; } .w60 { width: 60px; } .w62 { width: 62px; } .w76 { width: 76px; }
.collapse { margin: auto 4px 4px auto; }

/* work area */
.work { flex: 1; display: flex; min-height: 0; border-bottom: 1px solid #e1dfdd; }
.rail { width: 41px; border-right: 1px solid #e1dfdd; display: flex; flex-direction: column; }
.rail button { height: 40px; border-left: 3px solid transparent; padding-right: 2px; display: flex; align-items: center; justify-content: center; }
.rail .on { border-color: #117865; }
.center { flex: 1; min-width: 0; display: flex; flex-direction: column; }
.canvas { flex: 1; min-height: 0; background: #c5c8e7; padding: 10px 64px; }
.report { background: #eaebfb; box-shadow: 0 0 8px rgba(200,198,205,.9); }
.rhead { height: 58px; display: flex; background: #182a3a; border-bottom: 1px solid #2a5f9e; }
.logo { width: 152px; background: #1f2d3b; border-right: 1px solid #5a6672; display: flex; align-items: center; justify-content: center; gap: 3px; color: #fff; font: 14px "DejaVu Sans", sans-serif; padding-right: 12px; }
.logo b { font-weight: 400; color: #4696cf; }
.pills { flex: 1; display: flex; gap: 20px; padding: 5px 26px 9px 18px; color: #0fdc9a; }
.pills a { flex: 1; display: flex; align-items: center; justify-content: center; text-align: center; position: relative; z-index: 0; font: 700 16px/18px Roboto, sans-serif; }
.pills a::before { content: ""; position: absolute; inset: 0 3px; z-index: -1; background: #354266; border-radius: 18px 10px 18px 10px; transform: skewX(-8deg); box-shadow: 2px 2px 4px rgba(0,0,0,.25); }
.pills .on { color: #fff; }
.pills .on::before { background: #2fb08f; }
.rbody { display: flex; position: relative; height: 374px; clip-path: inset(-20px 0 0 0); }
.visuals { flex: 1; display: flex; flex-direction: column; gap: 8px; padding-top: 20px; }
.cards { display: flex; gap: 11px; padding: 0 5px 0 11px; height: 75px; }
.kpi, .slicer, .under { background: #eaebfb; border: 1px solid #e3e4ef; border-radius: 8px; box-shadow: 4px 4px 7px #9db4d6; }
.kpi { text-align: center; white-space: nowrap; padding-top: 8px; }
.kpi-first { width: 130px; } .kpi-wide { width: 148px; } .kpi-rest { flex: 1; }
.kpi h3 { font: 700 15px/20px Inter, sans-serif; color: #12508c; }
.kpi .sm { font-size: 14px; text-align: left; padding-left: 6px; }
.kpi p { font: 21px/24px Roboto, sans-serif; color: #000; margin-top: 11px; }
.charts { flex: 1; display: flex; gap: 7px; padding-right: 5px; }
.treemap { width: 251px; background: #eaebfb; border: 1px solid #f8f8ff; border-radius: 8px; padding: 5px 4px 4px 5px; display: flex; flex-direction: column; gap: 1px; box-shadow: 4px 4px 7px #9db4d6; font: 700 9px/20px "Noto Sans", sans-serif; color: #fff; }
.tr { display: flex; gap: 1px; flex: 1 1 0; min-height: 0; min-width: 0; }
.tc { display: flex; flex-direction: column; gap: 1px; flex: 1 1 0; min-width: 0; min-height: 0; }
.treemap [class^="c"] { flex-basis: 0; min-width: 0; min-height: 0; text-indent: 3px; white-space: nowrap; overflow: hidden; }
.c1 { background: #080f50; } .c2 { background: #21dfab; } .c3 { background: #6fbaff; } .c4 { background: #d9b300; } .c5 { background: #4092ff; } .c6 { background: #15c6f4; } .c7 { background: #e66c37; } .c8 { background: #118dff; } .c9 { background: #d64550; } .c10 { background: #e044a7; } .c11 { background: #197278; }
.c12 { background: #6b007b; } .c13 { background: #744ec2; }
.under { flex: 1; height: 134px; }
.slicers { width: 175px; padding: 20px 0 0 5px; }
.slicer { height: 60px; margin-bottom: 15px; padding: 9px 6px 0 8px; font: 16px/20px Roboto, sans-serif; color: #12508c; }
.slicer.near { height: 61px; margin-right: 1px; margin-left: -1px; margin-bottom: 8px; }
.slicer.short { height: 57px; margin-bottom: 11px; padding-top: 8px; }
.slicer label { display: block; }
.sel { position: relative; height: 22px; margin-top: 4px; color: #252423; font-size: 13px; }
.sel select { appearance: none; width: 100%; height: 22px; padding-left: 1px; }
.sel svg { position: absolute; right: 0; top: 2px; pointer-events: none; }
.insights { position: absolute; left: 258px; top: 5px; width: 43%; height: 324px; background: #eaebfb; border: 1px solid #e0e1ea; box-shadow: 4px 4px 7px #9db4d6; padding: 6px 0 0 10px; }
.insights h2 { font: 700 18px/24px "Noto Sans", sans-serif; color: #12508c; text-decoration: underline; text-align: center; padding-right: 10px; }
.insights ul { margin-top: 21px; font: 700 17px/20px Roboto, sans-serif; color: #0c1352; }
.insights li { padding-left: 5px; position: relative; white-space: nowrap; }
.insights li::before { content: ""; position: absolute; left: 1px; top: 4px; width: 1px; height: 2px; background: #333; }
.more { position: absolute; right: 0; top: -25px; width: 24px; height: 23px; background: #fff; display: flex; gap: 4px; align-items: center; justify-content: center; }
.more i { width: 2px; height: 2px; background: #605e5c; }

/* page tabs */
.pages { height: 35px; flex: none; display: flex; }
.dev { width: 24px; margin: 0 10px; border-bottom: 3px solid transparent; height: 31px; display: flex; align-items: center; justify-content: center; }
.dev + .dev { margin-right: 8px; margin-left: 11px; }
.dev.on { border-color: #117865; }
.arr { width: 20px; }
.ptabs { display: flex; background: #fff; font-size: 11px; }
.ptabs button { padding: 4px 21px 0; border-left: 1px solid #d2d0ce; border-bottom: 4px solid #fff; white-space: nowrap; }
.ptabs .on { border-bottom-color: #117865; font-weight: 600; border-left-color: #8a8886; padding: 4px 20px 0; }
.ptabs .add { background: #117865; border: 0; width: 39px; padding: 0; }

/* side strips */
.strip { display: flex; flex-direction: column; align-items: center; padding-top: 12px; }
.strip h2 { writing-mode: vertical-rl; font-size: 14px; line-height: 20px; font-weight: 600; }
.filters { width: 32px; background: #fff; }
.filters > svg { margin: 15px 0 7px 4px; }
.selection { width: 35px; border-left: 1px solid #e1dfdd; }
.selection h2 { margin-top: 14px; }

/* visualizations pane */
.viz { width: 181px; border-left: 1px solid #e1dfdd; border-right: 1px solid #e1dfdd; display: flex; flex-direction: column; overflow: hidden; }
.ptitle { display: flex; align-items: center; justify-content: space-between; padding: 7px 7px 0 8px; }
.ptitle h2 { font-weight: 600; font-size: 15px; line-height: 24px; }
.viz h3 { font-weight: 600; padding: 7px 8px 0; }
.modes { height: 48px; padding: 3px 8px 0; border-bottom: 1px solid #8a8886; display: flex; gap: 34px; position: relative; }
.modes button { width: 32px; height: 32px; border-radius: 2px; display: grid; place-items: center; }
.modes .on { background: #d2d0ce; }
.notch { position: absolute; left: 16px; bottom: -1px; }
.vgrid { display: grid; grid-template-columns: repeat(6, 28px); grid-auto-rows: 28px; padding: 6px 0 0 6px; place-items: center; }
.vgrid svg { width: 18px; height: 18px; }
.custom { margin: 2px 6px 0; border-top: 1px dashed #d2d0ce; padding: 7px 0 0 5px; height: 35px; }
.wells { border-top: 1px solid #d2d0ce; flex: 1; min-height: 0; padding: 9px 6px 0 4px; position: relative; margin-bottom: 8px; overflow: hidden; font-size: 11px; }
.wells h4 { padding-left: 8px; }
.wells .bold { font-weight: 600; margin: 11px 0 3px; color: #484644; }
.drop { display: block; width: 100%; height: 28px; border: 1px dashed #c8c6c4; background: #fff; text-align: left; padding-left: 10px; margin-top: 5px; white-space: nowrap; }
.drop.low { padding-left: 8px; margin-top: 3px; }
.tog { display: flex; justify-content: space-between; align-items: center; padding: 0 16px 0 8px; height: 27px; }
.tog span { width: 32px; height: 16px; border: 1px solid #605e5c; border-radius: 8px; background: #fff; display: flex; align-items: center; gap: 2px; padding-left: 4px; }
.tog input { appearance: none; width: 8px; height: 8px; border-radius: 4px; background: #605e5c; }
.tog i { font-style: normal; font-size: 9px; }
.wells::after { content: ""; position: absolute; right: 0; top: 2px; width: 6px; height: 151px; border-radius: 3px; background: #8a8886; }

/* data pane */
.fields { width: 181px; position: relative; overflow: hidden; font-size: 12px; }
.fsearch { display: flex; align-items: center; height: 24px; margin: 14px 5px 11px; background: #fff; border: 1px solid #d2d0ce; border-bottom-color: #605e5c; border-radius: 3px; padding-left: 11px; gap: 6px; }
.fsearch input { width: 100px; outline: 0; font-size: 12px; }
.tree { font-size: 11px; }
.tree li { height: 24px; white-space: nowrap; }
.tb { display: flex; align-items: center; gap: 4px; padding-left: 14px; }
.tb .right { transform: rotate(-90deg); }
.tw { color: #605e5c; }
.tree label { display: flex; align-items: center; height: 24px; padding-left: 45px; }
.tree input { appearance: none; width: 12px; height: 12px; border: 1px solid #797775; border-radius: 2px; margin-right: 6px; }
.tree label svg { width: 14px; height: 14px; margin-right: 6px; }
.fields::after { content: ""; position: absolute; right: 4px; top: 89px; width: 8px; height: 256px; background: #8a8886; }

/* status bar */
.status { height: 23px; flex: none; display: flex; justify-content: space-between; align-items: center; padding: 0 18px 0 4px; font-size: 11px; color: #3b3a39; }
.zoom { display: flex; align-items: center; gap: 6px; color: #605e5c; }
.zoom .plain { font-size: 14px; }
.zoom input { appearance: none; width: 100px; height: 12px; background: linear-gradient(#605e5c, #605e5c) 50% 50% / 1px 6px no-repeat, linear-gradient(#797775, #797775) 0 50% / 100% 1px no-repeat; }
.zoom input::-webkit-slider-thumb { appearance: none; width: 4px; height: 11px; background: #484644; }
.pct { margin: 0 13px 0 8px; }

/* task bar */
.taskbar { height: 41px; flex: none; background: #020308; color: #fff; display: flex; }
.taskbar button { width: 49px; display: flex; align-items: center; justify-content: center; position: relative; }
.taskbar .open::after { content: ""; position: absolute; left: 4px; right: 4px; bottom: 0; height: 2px; background: #76b9ed; }
.taskbar .cur { background: #343538; }
.taskbar .cur::after { left: 0; right: 0; }
.tray { margin-left: auto; display: flex; align-items: center; gap: 9px; padding-right: 22px; font-size: 11px; }
.clock { text-align: center; line-height: 18px; width: 66px; }
.tray .clock + svg { margin: 0 2px 0 1px; }

.mark { position: fixed; right: 56px; bottom: 73px; width: 237px; pointer-events: none; color: rgba(120,118,116,.5); font-size: 15px; line-height: 20px; white-space: nowrap; z-index: 5; }
.mark .big { font-size: 19px; line-height: 24px; }
```
